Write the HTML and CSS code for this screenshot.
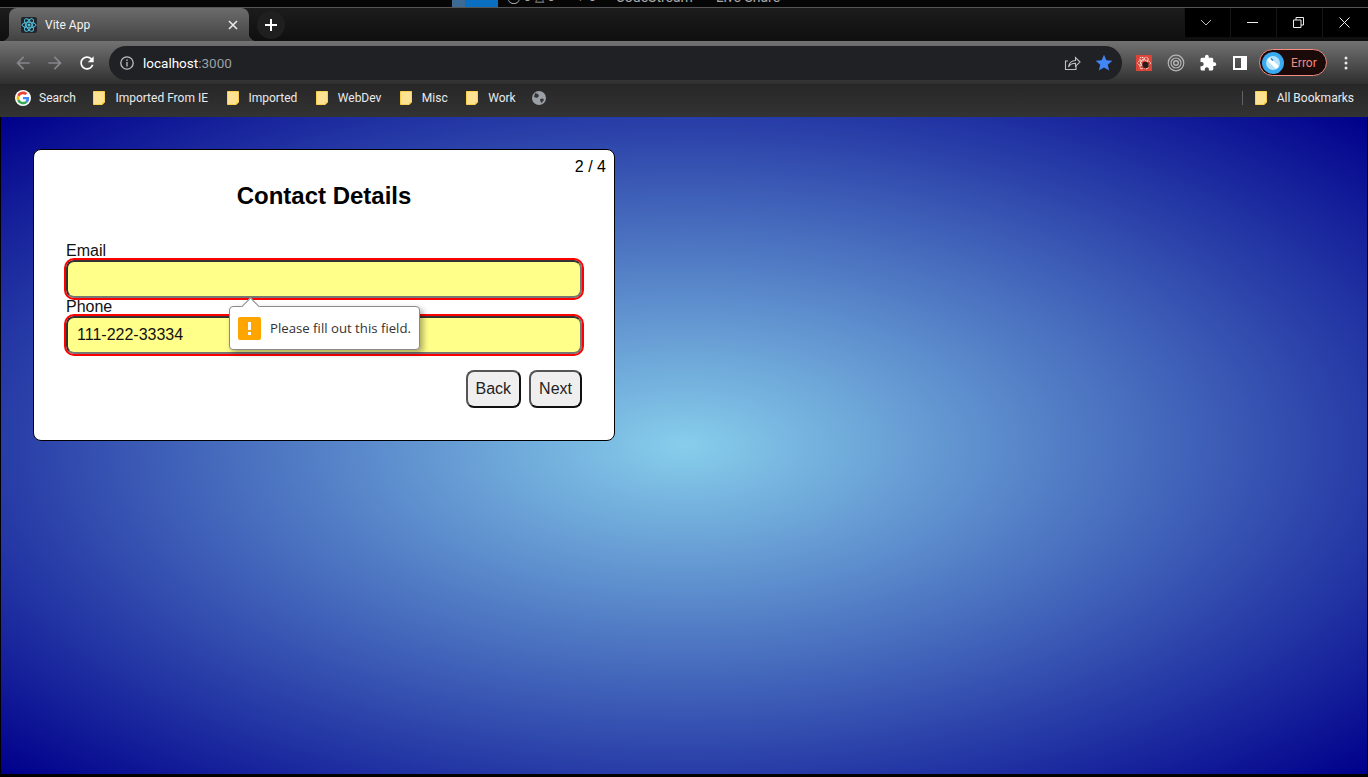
FILE: index.html
```html
<!DOCTYPE html>
<html lang="en">
<head>
    <meta charset="UTF-8">
    <title>Vite App</title>
    <link rel="stylesheet" href="styles.css">
</head>
<body>
    <svg class="defs" width="0" height="0">
        <symbol id="folder" viewBox="0 0 12 14">
            <path d="M.5.5h11v10.5l-2.5 2.5H.5z" fill="#fde293" stroke="#fbd04f"/>
            <path d="M9 14v-3h3z" fill="#fbd04f"/>
        </symbol>
    </svg>

    <div class="behind">
        <div class="behind-inner">
            <span class="behind-thumb"></span>
            <span class="behind-remote"></span>
            <span class="behind-text first">◯ 0 △ 0</span>
            <span class="behind-text second">♧ 0</span>
            <span class="behind-text wide">CodeStream</span>
            <span class="behind-text wide">Live Share</span>
        </div>
    </div>

    <div class="tabstrip">
        <div class="tab">
            <svg class="favicon" width="16" height="16" viewBox="0 0 16 16">
                <rect width="16" height="16" rx="2" fill="#20262c"/>
                <g fill="none" stroke="#53c1de" stroke-width="1">
                    <ellipse cx="8" cy="8" rx="7" ry="2.8"/>
                    <ellipse cx="8" cy="8" rx="7" ry="2.8" transform="rotate(60 8 8)"/>
                    <ellipse cx="8" cy="8" rx="7" ry="2.8" transform="rotate(120 8 8)"/>
                </g>
                <circle cx="8" cy="8" r="1.5" fill="#53c1de"/>
            </svg>
            <span class="tab-title">Vite App</span>
            <svg class="tab-close" width="10" height="10" viewBox="0 0 10 10">
                <path d="M1 1l8 8M9 1l-8 8" stroke="#e8eaed" stroke-width="1.6"/>
            </svg>
        </div>
        <div class="new-tab">
            <svg width="14" height="14" viewBox="0 0 14 14">
                <path d="M7 1v12M1 7h12" stroke="#fff" stroke-width="2"/>
            </svg>
        </div>
        <div class="window-controls">
            <div class="window-btn">
                <svg width="12" height="7" viewBox="0 0 12 7"><path d="M1 1l5 5 5-5" fill="none" stroke="#bbb"/></svg>
            </div>
            <div class="window-btn">
                <svg width="11" height="1" viewBox="0 0 11 1"><path d="M0 .5h11" stroke="#eee"/></svg>
            </div>
            <div class="window-btn">
                <svg width="11" height="11" viewBox="0 0 11 11"><path d="M.5 3h7.5v7.5H.5zM3 3V.5h7.5V8H8" fill="none" stroke="#eee"/></svg>
            </div>
            <div class="window-btn">
                <svg width="11" height="11" viewBox="0 0 11 11"><path d="M.5.5l10 10M10.5.5l-10 10" stroke="#eee"/></svg>
            </div>
        </div>
    </div>

    <div class="toolbar">
        <div class="tool-btn">
            <svg width="20" height="20" viewBox="0 0 24 24"><path fill="#85878a" d="M20 11H7.83l5.59-5.59L12 4l-8 8 8 8 1.41-1.41L7.83 13H20v-2z"/></svg>
        </div>
        <div class="tool-btn">
            <svg width="20" height="20" viewBox="0 0 24 24"><path fill="#85878a" d="M12 4l-1.41 1.41L16.17 11H4v2h12.17l-5.58 5.59L12 20l8-8z"/></svg>
        </div>
        <div class="tool-btn">
            <svg width="20" height="20" viewBox="0 0 24 24"><path fill="#fff" d="M17.65 6.35C16.2 4.9 14.21 4 12 4c-4.42 0-7.99 3.58-7.99 8s3.57 8 7.99 8c3.73 0 6.84-2.55 7.73-6h-2.08c-.82 2.33-3.04 4-5.65 4-3.31 0-6-2.69-6-6s2.69-6 6-6c1.66 0 3.14.69 4.22 1.78L13 11h7V4l-2.35 2.35z"/></svg>
        </div>
        <div class="omnibox">
            <svg class="info-icon" width="16" height="16" viewBox="0 0 16 16">
                <circle cx="8" cy="8" r="6.2" fill="none" stroke="#bdc1c6" stroke-width="1.3"/>
                <path d="M8 7v4.4M8 4.6v1.3" stroke="#bdc1c6" stroke-width="1.3"/>
            </svg>
            <span class="url">localhost<span class="url-port">:3000</span></span>
            <div class="omni-actions">
                <div class="tool-btn">
                    <svg width="18" height="18" viewBox="0 0 18 18" fill="none" stroke="#bdc1c6" stroke-width="1.1">
                        <path d="M5 7H2.5v8.5H13V12"/>
                        <path d="M5.5 13c.5-4 3.5-6.5 7-6.5V3.5l4.500 4.500-4.500 4.300v-3c-3 0-5.500 1-7 3.700z"/>
                    </svg>
                </div>
                <div class="tool-btn">
                    <svg width="20" height="20" viewBox="0 0 24 24"><path fill="#4285f4" d="M12 17.27L18.18 21l-1.64-7.03L22 9.24l-7.190-.61L12 2 9.190 8.630 2 9.240l5.460 4.730L5.820 21z"/></svg>
                </div>
            </div>
        </div>
        <div class="tool-btn">
            <svg width="16" height="16" viewBox="0 0 16 16">
                <rect width="16" height="16" fill="#db4437"/>
                <g fill="none" stroke="#fbe3df" stroke-width="1" stroke-dasharray="1.500 .8">
                    <ellipse cx="8" cy="8" rx="6.500" ry="2.800"/>
                    <ellipse cx="8" cy="8" rx="6.500" ry="2.800" transform="rotate(60 8 8)"/>
                    <ellipse cx="8" cy="8" rx="6.500" ry="2.800" transform="rotate(120 8 8)"/>
                </g>
                <circle cx="9.500" cy="10" r="3.200" fill="#2a1a18"/>
            </svg>
        </div>
        <div class="tool-btn">
            <svg width="18" height="18" viewBox="0 0 18 18" fill="none" stroke="#b5b5b5">
                <circle cx="9" cy="9" r="7.800" stroke-width="1.200"/>
                <circle cx="9" cy="9" r="5" stroke-width="1.200"/>
                <circle cx="9" cy="9" r="2.300" stroke-width="1.400"/>
            </svg>
        </div>
        <div class="tool-btn">
            <svg width="18" height="18" viewBox="0 0 24 24"><path fill="#fff" d="M20.500 11H19V7c0-1.100-.9-2-2-2h-4V3.500C13 2.120 11.880 1 10.500 1S8 2.120 8 3.500V5H4c-1.100 0-1.990.9-1.990 2v3.800H3.500c1.490 0 2.700 1.210 2.700 2.700s-1.210 2.700-2.700 2.700H2V20c0 1.100.9 2 2 2h3.800v-1.500c0-1.490 1.210-2.700 2.700-2.700 1.490 0 2.700 1.210 2.700 2.700V22H17c1.100 0 2-.9 2-2v-4h1.500c1.380 0 2.500-1.120 2.500-2.500S21.880 11 20.500 11z"/></svg>
        </div>
        <div class="tool-btn">
            <svg width="14" height="14" viewBox="0 0 14 14"><path fill="#fff" fill-rule="evenodd" d="M0 0h14v14H0zM2 2v10h6V2z"/></svg>
        </div>
        <div class="profile">
            <svg width="22" height="22" viewBox="0 0 22 22">
                <circle cx="11" cy="11" r="11" fill="#39a9f0"/>
                <circle cx="11" cy="11" r="7" fill="#b4e2fb"/>
                <path d="M7.500 8l7 6.500" stroke="#fff" stroke-width="4" stroke-linecap="round"/>
                <path d="M9 6.500l2 2" stroke="#1976c8" stroke-width="1.500"/>
            </svg>
            <span class="profile-label">Error</span>
        </div>
        <div class="tool-btn kebab">
            <svg width="4" height="14" viewBox="0 0 4 14">
                <circle cx="2" cy="2" r="1.500" fill="#e8eaed"/>
                <circle cx="2" cy="7" r="1.500" fill="#e8eaed"/>
                <circle cx="2" cy="12" r="1.500" fill="#e8eaed"/>
            </svg>
        </div>
    </div>

    <div class="bookmarks">
        <div class="bookmark">
            <svg class="g-logo" width="16" height="16" viewBox="-6 -6 60 60">
                <circle cx="24" cy="24" r="30" fill="#fff"/>
                <path fill="#EA4335" d="M24 9.500c3.540 0 6.710 1.220 9.210 3.600l6.850-6.850C35.900 2.380 30.470 0 24 0 14.620 0 6.510 5.380 2.560 13.220l7.980 6.190C12.430 13.720 17.740 9.500 24 9.500z"/>
                <path fill="#4285F4" d="M46.980 24.550c0-1.570-.15-3.090-.38-4.550H24v9.020h12.940c-.58 2.960-2.260 5.480-4.780 7.180l7.730 6c4.510-4.180 7.090-10.360 7.090-17.650z"/>
                <path fill="#FBBC05" d="M10.530 28.590c-.48-1.450-.76-2.990-.76-4.590s.27-3.140.76-4.590l-7.980-6.190C.92 16.460 0 20.120 0 24c0 3.880.92 7.540 2.560 10.780l7.970-6.190z"/>
                <path fill="#34A853" d="M24 48c6.480 0 11.930-2.130 15.890-5.810l-7.730-6c-2.150 1.450-4.920 2.300-8.160 2.300-6.260 0-11.570-4.220-13.470-9.910l-7.980 6.190C6.510 42.620 14.620 48 24 48z"/>
            </svg>
            <span>Search</span>
        </div>
        <div class="bookmark"><svg width="12" height="14"><use href="#folder"/></svg><span>Imported From IE</span></div>
        <div class="bookmark"><svg width="12" height="14"><use href="#folder"/></svg><span>Imported</span></div>
        <div class="bookmark"><svg width="12" height="14"><use href="#folder"/></svg><span>WebDev</span></div>
        <div class="bookmark"><svg width="12" height="14"><use href="#folder"/></svg><span>Misc</span></div>
        <div class="bookmark"><svg width="12" height="14"><use href="#folder"/></svg><span>Work</span></div>
        <svg class="globe" width="14" height="14" viewBox="0 0 14 14">
            <circle cx="7" cy="7" r="7" fill="#9aa0a6"/>
            <path d="M3 2l3 1 1 2-2 2-3-1zM8 8l3-.5 1 1.500-2.500 3-1-1.500z" fill="#35363a"/>
        </svg>
        <div class="bookmark-end">
            <div class="bookmark"><svg width="12" height="14"><use href="#folder"/></svg><span>All Bookmarks</span></div>
        </div>
    </div>

    <div class="page">
        <div class="card">
            <div class="step">2 / 4</div>
            <h2>Contact Details</h2>
            <form class="form">
                <label for="email">Email</label>
                <input type="text" id="email">
                <label for="phone">Phone</label>
                <input type="text" id="phone" value="111-222-33334">
                <div class="buttons">
                    <button type="button">Back</button>
                    <button type="submit">Next</button>
                </div>
            </form>
            <div class="tooltip">
                <svg width="23" height="23" viewBox="0 0 23 23">
                    <rect width="23" height="23" rx="2" fill="#ffa500"/>
                    <rect x="10" y="5" width="3" height="8" fill="#fff"/>
                    <rect x="10" y="15" width="3" height="3" fill="#fff"/>
                </svg>
                <span>Please fill out this field.</span>
            </div>
        </div>
    </div>
</body>
</html>
```

FILE: styles.css
```css
* {
    box-sizing: border-box;
}

html, body {
    margin: 0;
    height: 100%;
}

body {
    display: flex;
    flex-direction: column;
    height: 777px;
    overflow: hidden;
    background-color: #000;
    font-family: Roboto, "Liberation Sans", sans-serif;
}

.defs {
    position: absolute;
}

/* the window behind the browser, only a sliver shows */
.behind {
    height: 8px;
    padding-left: 452px;
    overflow: hidden;
    border-bottom: 1px solid #555;
    background-color: #060606;
}

.behind-inner {
    display: flex;
    align-items: flex-end;
    height: 7px;
    color: #aaa;
    font-size: 12px;
    line-height: 7px;
}

.behind-thumb {
    width: 13px;
    height: 7px;
    background-color: #3c6a94;
}

.behind-remote {
    width: 33px;
    height: 7px;
    background-color: #0a6fc0;
}

.behind-text {
    margin-left: 20px;
    transform: translateY(-6px);
}

.behind-text.first {
    margin-left: 9px;
    letter-spacing: 0.5px;
}

.behind-text.wide {
    font-size: 14px;
}

.behind-text.wide:last-child {
    margin-left: 23px;
}

.tabstrip {
    display: flex;
    flex-shrink: 0;
    align-items: flex-start;
    height: 33px;
    padding-left: 9px;
    background: linear-gradient(#1c1c1c, #0f0f0f);
}

.tab {
    position: relative;
    display: flex;
    align-items: center;
    width: 240px;
    height: 33px;
    padding: 0 11px 0 12px;
    border-radius: 8px 8px 0 0;
    background: linear-gradient(#6c6c6c, #424242);
}

.tab::before,
.tab::after {
    content: "";
    position: absolute;
    bottom: 0;
    width: 8px;
    height: 8px;
}

.tab::before {
    left: -8px;
    background: radial-gradient(circle at 0 0, transparent 8px, #444 8.5px);
}

.tab::after {
    right: -8px;
    background: radial-gradient(circle at 100% 0, transparent 8px, #444 8.5px);
}

.tab-title {
    margin-left: 8px;
    color: #f1f3f4;
    font-size: 12px;
}

.tab-close {
    margin-left: auto;
}

.new-tab {
    display: flex;
    align-items: center;
    justify-content: center;
    width: 28px;
    height: 28px;
    margin: 3px 0 0 8px;
    border-radius: 50%;
    background-color: #1f1f1f;
}

.window-controls {
    display: flex;
    height: 29px;
    margin-left: auto;
    background-color: #000;
}

.window-btn {
    display: flex;
    align-items: center;
    justify-content: center;
    width: 46px;
    padding-right: 3px;
    border-left: 1px solid #151515;
}

.toolbar {
    display: flex;
    flex-shrink: 0;
    align-items: center;
    height: 43px;
    padding: 0 6px 0 7px;
    background: linear-gradient(#727272, #2f2f2f);
}

.tool-btn {
    display: flex;
    flex-shrink: 0;
    align-items: center;
    justify-content: center;
    width: 32px;
    height: 32px;
}

.omnibox {
    display: flex;
    flex: 1;
    align-items: center;
    height: 34px;
    margin: 0 6px;
    padding: 0 2px 0 10px;
    border-radius: 17px;
    background-color: #202124;
}

.url {
    margin-left: 8px;
    color: #fff;
    font-size: 13.5px;
}

.url-port {
    color: #9aa0a6;
}

.omni-actions {
    display: flex;
    margin-left: auto;
}

.profile {
    display: flex;
    flex-shrink: 0;
    align-items: center;
    width: 68px;
    height: 27px;
    margin-left: 3px;
    padding-left: 2px;
    border: 1px solid #f28b82;
    border-radius: 14px;
    background-color: #1a0a0a;
}

.profile-label {
    margin-left: 7px;
    color: #f28b82;
    font-size: 12px;
}

.kebab {
    margin-left: 3px;
}

.bookmarks {
    display: flex;
    flex-shrink: 0;
    align-items: center;
    gap: 18.5px;
    height: 33px;
    padding: 0 15px 5px;
    background: linear-gradient(#272727, #333);
}

.bookmark {
    display: flex;
    align-items: center;
    gap: 10px;
    color: #e8eaed;
    font-size: 12px;
}

.g-logo {
    margin-right: -2px;
}

.bookmark:first-child span {
    margin-right: -1px;
}

.globe {
    margin-left: -2px;
}

.bookmark-end {
    margin-left: auto;
    padding-left: 12px;
    border-left: 1px solid #5f6368;
}

.page {
    flex: 1;
    margin: 0 1px 3px;
    padding: 32px 0 0 32px;
    background: radial-gradient(skyblue, darkblue);
    font-family: "Liberation Sans", Arial, sans-serif;
}

.card {
    position: relative;
    width: 582px;
    padding: 32px;
    border: 1px solid #000;
    border-radius: 8px;
    background-color: #fff;
}

.step {
    position: absolute;
    top: 8px;
    right: 8px;
    font-size: 16px;
}

h2 {
    margin: 0 0 32px;
    font-size: 24px;
    text-align: center;
}

.form {
    display: flex;
    flex-direction: column;
}

label {
    font-size: 16px;
    color: #111;
}

input {
    width: 100%;
    height: 38px;
    padding: 0 9px;
    border-width: 2px;
    border-style: solid;
    border-color: #333 #767676 #767676 #333;
    border-radius: 8px;
    outline: 2px solid #f00;
    background-color: #ffff8a;
    color: #111;
    font-family: inherit;
    font-size: 16px;
}

.buttons {
    display: flex;
    justify-content: flex-end;
    gap: 8px;
    margin-top: 16px;
}

button {
    height: 38px;
    padding: 0 8px;
    border-width: 2px;
    border-style: solid;
    border-color: #555 #111 #111 #555;
    border-radius: 8px;
    background-color: #efefef;
    color: #222;
    font-family: inherit;
    font-size: 16px;
}

/* browser validation bubble */
.tooltip {
    position: absolute;
    top: 156px;
    left: 195px;
    display: flex;
    align-items: center;
    gap: 9px;
    width: 191px;
    height: 44px;
    padding-left: 8px;
    border: 1px solid #8a8a8a;
    border-radius: 4px;
    background-color: #fff;
    box-shadow: 3px 3px 6px rgba(0, 0, 0, 0.35);
    color: #333;
    font-family: "Open Sans", sans-serif;
    font-size: 13.2px;
}

.tooltip::before {
    content: "";
    position: absolute;
    top: -7px;
    left: 14px;
    width: 12px;
    height: 12px;
    border-top: 1px solid #8a8a8a;
    border-left: 1px solid #8a8a8a;
    background-color: #fff;
    transform: rotate(45deg);
}
```
